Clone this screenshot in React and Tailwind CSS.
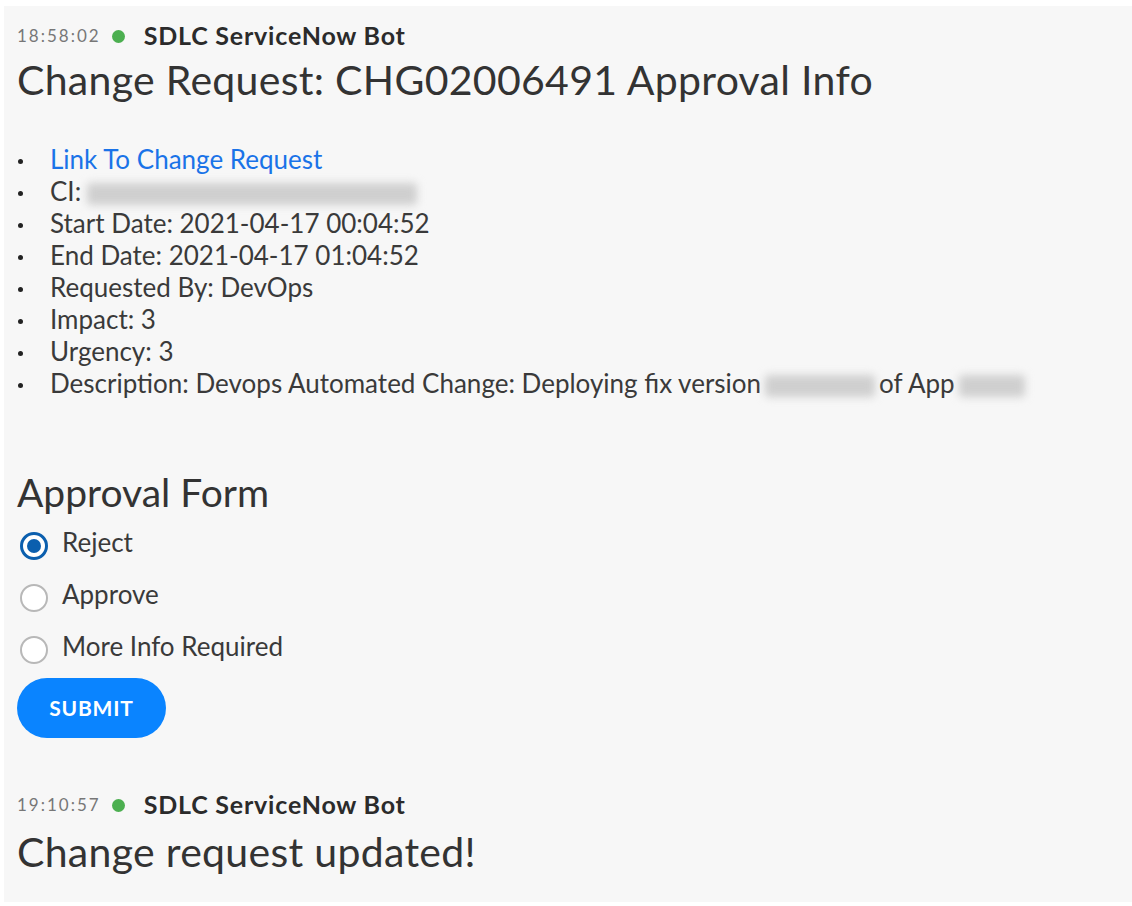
import React from 'react';

function Header({ time }) {
  return (
    <div className="flex items-center h-[28px]">
      <span className="text-[17px] tracking-[2px] text-[#777]">{time}</span>
      <span className="ml-[11px] w-[13px] h-[13px] rounded-full bg-[#4caf50]" />
      <span className="ml-[19px] text-[25px] tracking-[0.8px] font-bold text-[#2b2b2b]">SDLC ServiceNow Bot</span>
    </div>
  );
}

function Blur({ w }) {
  return <span className="inline-block align-middle h-[22px] rounded-sm bg-[#cfcfcf] blur-[4px]" style={{ width: w }} />;
}

function Item({ children }) {
  return (
    <li className="flex items-center h-[32px]">
      <span className="ml-[1px] mt-[4px] w-[5px] h-[5px] rounded-full bg-[#222]" />
      <span className="ml-[27px] flex items-center">{children}</span>
    </li>
  );
}

function Radio({ label, checked }) {
  return (
    <label className="flex items-center h-[52px]">
      {checked ? (
        <span className="ml-[3px] w-[28px] h-[28px] rounded-full border-[3px] border-[#0b5fae] bg-white flex items-center justify-center">
          <span className="w-[14px] h-[14px] rounded-full bg-[#0b5fae]" />
        </span>
      ) : (
        <span className="ml-[3px] w-[28px] h-[28px] rounded-full border-2 border-[#b8b8b8] bg-white" />
      )}
      <span className="ml-[14px] -mt-[7px] text-[26px] text-[#3a3a3a]">{label}</span>
    </label>
  );
}

export default function App() {
  const items = [
    'Start Date: 2021-04-17 00:04:52',
    'End Date: 2021-04-17 01:04:52',
    'Requested By: DevOps',
    'Impact: 3',
    'Urgency: 3',
  ];
  return (
    <div className="w-[1132px] h-[906px] bg-white pt-[6px] pl-[4px] pb-[4px] font-['Lato',sans-serif]">
      <div className="h-full bg-[#f7f7f7] pl-[13px] pt-[16px] text-[#333]">
        <Header time="18:58:02" />
        <h1 className="mt-[5px] text-[41px] tracking-[0.3px] leading-[50px] text-[#333]">Change Request: CHG02006491 Approval Info</h1>
        <ul className="mt-[38px] text-[26px] leading-[32px] text-[#3a3a3a]">
          <Item><a className="text-[#1a73e8]">Link To Change Request</a></Item>
          <Item>CI:<span className="ml-[6px]"><Blur w={330} /></span></Item>
          {items.map((t) => (
            <Item key={t}>{t}</Item>
          ))}
          <Item>Description: Devops Automated Change: Deploying fix version<span className="mx-[4px]"><Blur w={110} /></span>of App<span className="ml-[4px]"><Blur w={66} /></span></Item>
        </ul>
        <h2 className="mt-[71px] text-[39px] leading-[44px] text-[#333]">Approval Form</h2>
        <div className="mt-[6px]">
          <Radio label="Reject" checked />
          <Radio label="Approve" />
          <Radio label="More Info Required" />
        </div>
        <button className="mt-[2px] w-[149px] h-[60px] rounded-full bg-[#0a84ff] text-white text-[21px] font-bold tracking-[0.8px]">SUBMIT</button>
        <div className="mt-[53px]">
          <Header time="19:10:57" />
        </div>
        <div className="mt-[8px] text-[41px] tracking-[0.3px] leading-[50px] text-[#333]">Change request updated!</div>
      </div>
    </div>
  );
}
